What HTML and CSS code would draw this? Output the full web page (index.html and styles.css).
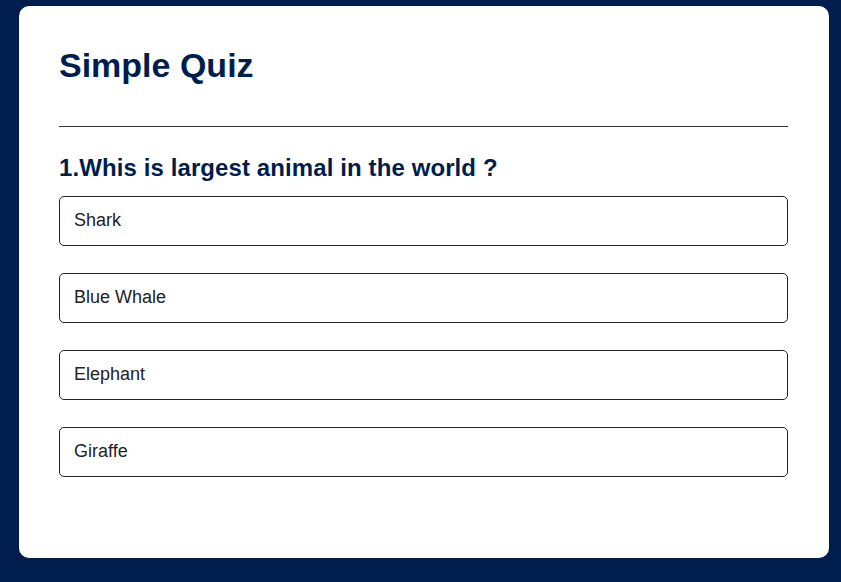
FILE: index.html
```html
<!DOCTYPE html>
<html lang="en">
<head>
<meta charset="utf-8">
<title>Simple Quiz</title>
<link rel="stylesheet" href="styles.css">
</head>
<body>
<div class="app">
  <h1 class="title">Simple Quiz</h1>
  <div class="quiz">
    <h2 class="question">1.Whis is largest animal in the world ?</h2>
    <div class="answers">
      <button class="btn">Shark</button>
      <button class="btn">Blue Whale</button>
      <button class="btn">Elephant</button>
      <button class="btn">Giraffe</button>
    </div>
  </div>
</div>
</body>
</html>
```
FILE: styles.css
```css
* { box-sizing: border-box; }
html, body { margin: 0; padding: 0; }
body {
  background: #001e4d;
  font-family: "Liberation Sans", Arial, sans-serif;
  min-height: 582px;
  padding: 6px 12px 0 19px;
}
.app {
  background: #fff;
  border-radius: 10px;
  padding: 40px 41px 81px 40px;
}
.title {
  margin: 0;
  font-size: 34px;
  line-height: 38px;
  font-weight: 700;
  color: #001e4d;
  padding-bottom: 42px;
  border-bottom: 1px solid #333;
}
.question {
  margin: 27px 0 0 0;
  font-size: 24px;
  line-height: 28px;
  font-weight: 700;
  color: #001e4d;
  letter-spacing: 0.1px;
}
.answers {
  margin-top: 14px;
  display: flex;
  flex-direction: column;
  gap: 27px;
}
.btn {
  display: block;
  width: 100%;
  height: 50px;
  background: #fff;
  color: #222;
  border: 1px solid #222;
  border-radius: 5px;
  padding: 0 14px 2px 14px;
  text-align: left;
  font-family: "Liberation Sans", Arial, sans-serif;
  font-size: 18px;
  cursor: pointer;
}
```
